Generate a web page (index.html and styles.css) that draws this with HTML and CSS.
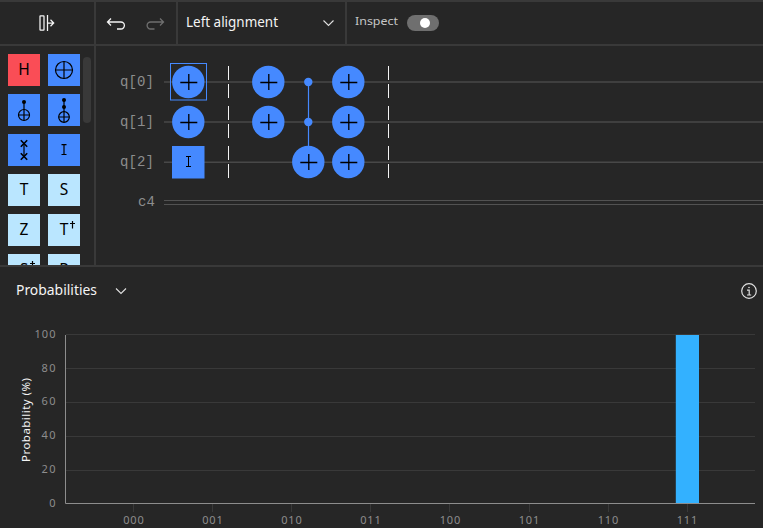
FILE: index.html
```html
<!DOCTYPE html>
<html lang="en">
<head>
<meta charset="utf-8">
<title>Circuit composer</title>
<link rel="stylesheet" href="styles.css">
</head>
<body>
<main class="app">
  <header class="toolbar">
    <div class="tool-panel">
      <svg width="16" height="16" viewBox="0 0 16 16" fill="none" stroke="#f4f4f4" stroke-width="1.250"><rect x="1" y=".8" width="4" height="14.400" rx=".5"/><path d="M8.500 0v16M8.500 8h6.200M11.500 4.800 14.700 8l-3.200 3.200"/></svg>
    </div>
    <div class="tool-history">
      <svg width="20" height="14" viewBox="0 0 20 14" fill="none" stroke="#f4f4f4" stroke-width="1.300"><path d="M5 1.500 1.500 5 5 8.500M1.500 5h13.400a3.500 3.500 0 0 1 0 7H11"/></svg>
      <svg width="20" height="14" viewBox="0 0 20 14" fill="none" stroke="#6f6f6f" stroke-width="1.300"><path d="M14 1.500 17.500 5 14 8.500M17.500 5H4.600a3.500 3.500 0 0 0 0 7H8.500"/></svg>
    </div>
    <div class="tool-select">
      <svg class="label" width="96" height="22"><text x="0" y="15" textLength="92" lengthAdjust="spacingAndGlyphs">Left alignment</text></svg>
      <svg width="12" height="8" viewBox="0 0 12 8" fill="none" stroke="#e0e0e0" stroke-width="1.1"><path d="M1.500 1.500l5 5 5-5"/></svg>
    </div>
    <div class="tool-inspect">
      <svg class="small" width="44" height="18"><text x="0" y="11" textLength="43" lengthAdjust="spacingAndGlyphs">Inspect</text></svg>
      <span class="toggle"><span class="knob"></span></span>
    </div>
  </header>

  <section class="workspace">
    <aside class="palette">
      <div class="gates">
        <svg class="gate red" viewBox="0 0 32 32"><text x="16" y="21">H</text></svg>
        <svg class="gate blue" viewBox="0 0 32 32"><circle cx="16" cy="16" r="8.5"/><path d="M7.5 16h17M16 7.5v17"/></svg>
        <svg class="gate blue" viewBox="0 0 32 32"><circle class="dot" cx="16" cy="8" r="2"/><circle cx="16" cy="21" r="5.5"/><path d="M16 8v18.500M10.500 21h11"/></svg>
        <svg class="gate blue" viewBox="0 0 32 32"><circle class="dot" cx="16" cy="6" r="2"/><circle class="dot" cx="16" cy="13" r="2"/><circle cx="16" cy="23" r="5.300"/><path d="M16 6v22.300M10.700 23h10.600"/></svg>
        <svg class="gate blue" viewBox="0 0 32 32"><path d="M16 9.500v13"/><path class="cross" d="M12.800 6.300l6.400 6.400m0-6.400-6.400 6.400M12.800 19.300l6.400 6.400m0-6.400-6.400 6.400"/></svg>
        <svg class="gate blue" viewBox="0 0 32 32"><path class="letter" d="M13.500 10.600h5M16 10.600v10M13.500 20.500h5"/></svg>
        <svg class="gate cyan" viewBox="0 0 32 32"><text x="16" y="21">T</text></svg>
        <svg class="gate cyan" viewBox="0 0 32 32"><text x="16" y="21">S</text></svg>
        <svg class="gate cyan" viewBox="0 0 32 32"><text x="16" y="21">Z</text></svg>
        <svg class="gate cyan" viewBox="0 0 32 32"><text x="16" y="21">T</text><path class="dagger" d="M24.500 7v7.500M22 9.500h5"/></svg>
        <svg class="gate cyan" viewBox="0 0 32 32"><text x="16" y="20.500">S</text><path class="dagger" d="M24.500 7v4.500M22 9.500h5"/></svg>
        <svg class="gate cyan" viewBox="0 0 32 32"><text x="16" y="20.500">P</text></svg>
      </div>
      <div class="scrollbar"></div>
    </aside>

    <svg class="circuit" width="667" height="219" viewBox="96 46 667 219">
      <defs>
        <g id="not"><circle r="16.200" fill="#4589ff"/><path d="M-8 .5H9M.5-8V8" stroke="#000" stroke-width="1.300"/></g>
        <path id="barrier" d="M.5 66v14M.5 84v14M.5 106v14M.5 124v14M.5 146v14M.5 164v14" stroke="#f4f4f4"/>
      </defs>
      <g class="wire-label">
        <text x="120" y="86" textLength="34">q[0]</text>
        <text x="120" y="126" textLength="34">q[1]</text>
        <text x="120" y="166" textLength="34">q[2]</text>
        <text x="138" y="206" textLength="17">c4</text>
      </g>
      <path d="M164 82h599M164 122h599M164 162.300h599" stroke="#484848" stroke-width="1.400"/>
      <path d="M164 200.500h599M164 204.500h599" stroke="#525252"/>
      <rect x="170.500" y="63.500" width="36" height="36.500" fill="none" stroke="#4589ff"/>
      <use href="#not" x="188.300" y="82"/>
      <use href="#not" x="188.300" y="122"/>
      <rect x="172" y="146" width="32.500" height="32.500" fill="#4589ff"/>
      <path d="M186 156.500h5M188.500 156.500v10M186 166.500h5" stroke="#000" fill="none"/>
      <use href="#barrier" x="228"/>
      <use href="#not" x="268.300" y="82"/>
      <use href="#not" x="268.300" y="122"/>
      <path d="M308.500 82v66" stroke="#4589ff" stroke-width="1.200"/>
      <circle cx="308.300" cy="82" r="4.200" fill="#4589ff"/>
      <circle cx="308.300" cy="122" r="4.200" fill="#4589ff"/>
      <use href="#not" x="308.300" y="162"/>
      <use href="#not" x="348.300" y="82"/>
      <use href="#not" x="348.300" y="122"/>
      <use href="#not" x="348.300" y="162"/>
      <use href="#barrier" x="388"/>
    </svg>
  </section>

  <section class="results">
    <div class="results-head">
      <svg class="label" width="84" height="22"><text x="0" y="15" textLength="81" lengthAdjust="spacingAndGlyphs">Probabilities</text></svg>
      <svg width="12" height="8" viewBox="0 0 12 8" fill="none" stroke="#e0e0e0" stroke-width="1.100"><path d="M1 1.500l5 5 5-5"/></svg>
      <svg class="info" width="16" height="16" viewBox="0 0 16 16" fill="none" stroke="#e0e0e0" stroke-width="1.200"><circle cx="8" cy="8" r="7.300"/><path d="M6 7.200h2.200V12M6 12h4.200"/><circle cx="8" cy="4.500" r=".5" fill="#e0e0e0" stroke-width=".6"/></svg>
    </div>
    <svg class="chart" width="763" height="213" viewBox="0 315 763 213">
      <path d="M66 334.500h689M66 368.500h689M66 402.500h689M66 436.500h689M66 470.500h689" stroke="#393939"/>
      <path d="M133.500 504v8M212.500 504v8M291.500 504v8M370.500 504v8M449.500 504v8M529.500 504v8M608.500 504v8M687.500 504v8" stroke="#393939"/>
      <rect x="675.800" y="335" width="23.200" height="168.500" fill="#33b1ff"/>
      <path d="M65.500 335v168.500H755" fill="none" stroke="#8d8d8d"/>
      <g class="y-label">
        <text x="55.500" y="338" textLength="21">100</text>
        <text x="55.500" y="372" textLength="14">80</text>
        <text x="55.500" y="405" textLength="14">60</text>
        <text x="55.500" y="439" textLength="14">40</text>
        <text x="55.500" y="473" textLength="14">20</text>
        <text x="55.500" y="507">0</text>
      </g>
      <g class="x-label">
        <text x="133.500" y="524" textLength="20.500">000</text>
        <text x="212.500" y="524" textLength="20.500">001</text>
        <text x="291.500" y="524" textLength="20.500">010</text>
        <text x="370.500" y="524" textLength="20.500">011</text>
        <text x="450" y="524" textLength="20.500">100</text>
        <text x="529" y="524" textLength="20.500">101</text>
        <text x="608" y="524" textLength="20.500">110</text>
        <text x="687" y="524" textLength="20.500">111</text>
      </g>
      <text class="axis-title" transform="translate(29.500 462) rotate(-90)" textLength="84" lengthAdjust="spacing">Probability (%)</text>
    </svg>
  </section>
</main>
</body>
</html>
```

FILE: styles.css
```css
* { box-sizing: border-box; }

body {
  margin: 0;
  background: #262626;
  color: #f4f4f4;
  font-family: "Noto Sans", "Open Sans", sans-serif;
  overflow: hidden;
}

svg { display: block; flex: none; }

.app {
  width: 763px;
  height: 528px;
  display: flex;
  flex-direction: column;
}

.toolbar {
  height: 46px;
  flex: none;
  display: flex;
  border-top: 2px solid #393939;
  border-bottom: 2px solid #393939;
}

.toolbar > div {
  display: flex;
  align-items: center;
}

.tool-panel {
  width: 96px;
  border-right: 2px solid #393939;
  justify-content: center;
}

.tool-history {
  width: 82px;
  border-right: 2px solid #393939;
  gap: 20px;
  padding: 2px 0 0 10px;
}

.tool-select {
  width: 169px;
  border-right: 2px solid #393939;
  justify-content: space-between;
  padding: 0 11px 0 8px;
}

.tool-inspect {
  gap: 8px;
  padding-left: 8px;
}

.label text {
  font-size: 13.5px;
  fill: #f4f4f4;
}

.small text {
  font-size: 11.5px;
  fill: #c6c6c6;
}

.toggle {
  width: 32px;
  height: 16px;
  border-radius: 8px;
  background: #6f6f6f;
  padding: 3px 0 0 13px;
}

.knob {
  display: block;
  width: 10px;
  height: 10px;
  border-radius: 50%;
  background: #fff;
}

.workspace {
  height: 221px;
  flex: none;
  display: flex;
  border-bottom: 2px solid #393939;
}

.palette {
  width: 96px;
  height: 219px;
  flex: none;
  display: flex;
  gap: 3px;
  overflow: hidden;
  padding: 8px 0 0 8px;
  border-right: 2px solid #393939;
}

.gates {
  display: grid;
  grid-template-columns: 32px 32px;
  grid-auto-rows: 32px;
  gap: 8px;
}

.gate {
  width: 32px;
  height: 32px;
  fill: none;
  stroke: #000;
  stroke-width: 1.2;
}

.gate text {
  fill: #000;
  stroke: none;
  font-size: 15.5px;
  text-anchor: middle;
}

.gate .dot { fill: #000; stroke: none; }
.gate .cross { stroke-width: 1.6; }
.red { background: #fa4d56; }
.blue { background: #4589ff; }
.cyan { background: #bae6ff; }

.scrollbar {
  width: 8px;
  height: 66px;
  margin-top: 3px;
  border-radius: 4px;
  background: #393939;
}

.wire-label text {
  font-family: "Liberation Mono", monospace;
  font-size: 14px;
  fill: #8d8d8d;
}

.results-head {
  height: 48px;
  display: flex;
  align-items: center;
  gap: 15px;
  padding: 0 6px 0 16px;
}

.info { margin-left: auto; }

.y-label text,
.x-label text {
  font-size: 11px;
  fill: #8d8d8d;
}

.y-label text { text-anchor: end; }
.x-label text { text-anchor: middle; }

.axis-title {
  font-size: 11.5px;
  fill: #f4f4f4;
}
```
